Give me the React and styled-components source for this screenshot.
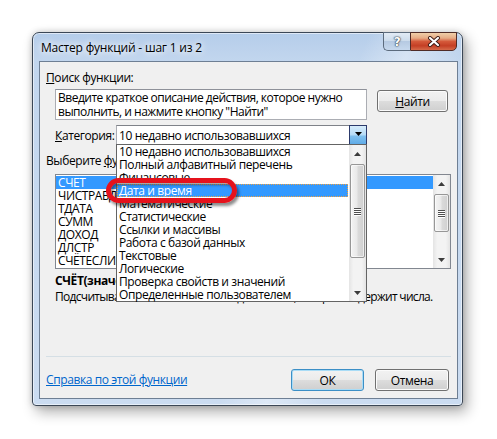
import React from 'react'
import styled, { createGlobalStyle } from 'styled-components'

const GlobalStyle = createGlobalStyle`
  html, body {
    margin: 0;
    padding: 0;
    background: #fff;
  }
  body {
    font-family: "Open Sans", "Noto Sans", sans-serif;
    font-size: 12px;
    letter-spacing: -0.4px;
    color: #000;
  }
  * {
    box-sizing: border-box;
  }
`

const Page = styled.div`
  width: 497px;
  height: 439px;
  padding: 32px 0 0 32px;
  overflow: hidden;
`

const Window = styled.div`
  width: 431px;
  height: 374px;
  display: flex;
  flex-direction: column;
  padding: 0 4px 6px 6px;
  border: 1px solid #3b4756;
  border-radius: 7px 7px 4px 4px;
  background:
    linear-gradient(112deg, rgba(255,255,255,0) 58%, rgba(255,255,255,0.35) 66%, rgba(255,255,255,0) 76%),
    linear-gradient(180deg, #b5cdea 0, #c2d6ee 28px, #cbdcf1 100%);
  box-shadow:
    inset 0 0 0 1px rgba(255,255,255,0.55),
    4px 6px 14px rgba(0,0,0,0.32),
    0 0 6px rgba(0,0,0,0.18);
`

const TitleBar = styled.div`
  height: 28px;
  display: flex;
  align-items: flex-start;
  flex: none;
`

const Title = styled.div`
  padding: 7px 0 0 2px;
  line-height: 16px;
  letter-spacing: -0.2px;
  text-shadow: 0 0 6px #fff, 0 0 10px #fff;
`

const CaptionButtons = styled.div`
  margin-left: auto;
  margin-top: -1px;
  margin-right: 1px;
  display: flex;
`

const HelpButton = styled.div`
  width: 27px;
  height: 19px;
  border: 1px solid #5c6b7d;
  border-right: none;
  border-radius: 0 0 0 5px;
  background: linear-gradient(#e2ebf5 0%, #cddcec 45%, #b6cae2 50%, #c6d8ed 100%);
  display: flex;
  align-items: center;
  justify-content: center;
  font-family: "DejaVu Sans", sans-serif;
  font-weight: bold;
  font-size: 12px;
  color: #fff;
  text-shadow: 0 0 1px #33404f, 0 0 1px #33404f, 0 0 2px #33404f;
`

const CloseButton = styled.div`
  width: 47px;
  height: 19px;
  border: 1px solid #4f2b26;
  border-radius: 0 0 5px 0;
  background: linear-gradient(#efcfa9 0%, #e6ab85 30%, #d4593a 50%, #c43f25 75%, #d56a4a 100%);
  display: flex;
  align-items: center;
  justify-content: center;
`

const Client = styled.div`
  flex: 1;
  display: flex;
  flex-direction: column;
  padding: 8px 6px 7px 6px;
  border: 1px solid #6e7f94;
  background: #f0f0f0;
`

const Label = styled.div`
  line-height: 15px;
  margin-top: ${p => p.$top || 0}px;
  padding-left: ${p => p.$indent || 0}px;
  font-weight: ${p => (p.$bold ? 700 : 400)};
  letter-spacing: ${p => (p.$tight ? '-0.7px' : 'inherit')};
  white-space: nowrap;
`

const Key = styled.span`
  text-decoration: underline;
  text-underline-offset: 1px;
`

const SearchRow = styled.div`
  display: flex;
  align-items: flex-start;
  margin-top: 4px;
  padding-left: 9px;
`

const SearchBox = styled.div`
  width: 312px;
  height: 31px;
  padding: 1px 2px;
  border: 1px solid #abadb3;
  border-top-color: #8e9199;
  background: #fff;
  line-height: 14px;
  letter-spacing: -0.5px;
  white-space: nowrap;
`

const Button = styled.button`
  width: ${p => p.$w}px;
  height: 22px;
  margin: ${p => p.$margin || 0};
  padding: 0;
  font: inherit;
  letter-spacing: inherit;
  color: #000;
  border: 1px solid ${p => (p.$primary ? '#3c8fc6' : '#707070')};
  border-radius: 3px;
  background: linear-gradient(#f2f2f2 0%, #ebebeb 49%, #dddddd 50%, #cfcfcf 100%);
  box-shadow: inset 0 0 0 1px ${p => (p.$primary ? '#a9dcf6' : '#fbfbfb')};
`

const CategoryRow = styled.div`
  display: flex;
  align-items: center;
  margin-top: 5px;
  padding-left: 9px;
`

const CategoryLabel = styled.div`
  width: 61px;
`

const Combo = styled.div`
  position: relative;
  width: 251px;
  height: 21px;
  display: flex;
  border: 1px solid #abadb3;
  border-top-color: #7f8289;
  background: #fff;
`

const ComboValue = styled.div`
  flex: 1;
  line-height: 19px;
  padding-left: 2px;
  white-space: nowrap;
`

const DropButton = styled.div`
  width: 18px;
  margin: -1px -1px -1px 0;
  border: 1px solid #2c3a6b;
  background: linear-gradient(#d7ecfb 0%, #b6dcf7 45%, #7fc0ef 55%, #5ca9e6 100%);
  display: flex;
  align-items: flex-start;
  justify-content: center;
  padding-top: 6px;
`

const Dropdown = styled.div`
  position: absolute;
  top: calc(100% - 1px);
  left: -1px;
  width: 251px;
  height: 158px;
  z-index: 5;
  display: flex;
  border: 1px solid #646464;
  background: #fff;
`

const DropItems = styled.div`
  flex: 1;
  display: flex;
  flex-direction: column;
`

const Item = styled.div`
  position: relative;
  height: 13px;
  line-height: 13px;
  padding-left: 2px;
  margin-right: ${p => p.$gap || 0}px;
  white-space: nowrap;
  color: ${p => (p.$selected ? '#fff' : '#000')};
  background: ${p => (p.$selected ? '#3399ff' : 'transparent')};
  outline: ${p => (p.$focus ? '1px dotted #f0a040' : 'none')};
  outline-offset: -1px;
`

const Mark = styled.div`
  position: absolute;
  left: -11px;
  top: -6px;
  width: 131px;
  height: 25px;
  z-index: 1;
  border: 5px solid #e5121c;
  border-radius: 13px;
  box-shadow: 2px 3px 3px rgba(0,0,0,0.45), inset 2px 2px 3px rgba(0,0,0,0.4);
`

const FuncList = styled.div`
  display: flex;
  margin: 6px 0 0 9px;
  width: 396px;
  height: 95px;
  border: 1px solid #828790;
  background: #fff;
`

const FuncItems = styled.div`
  flex: 1;
  padding-top: 1px;
  overflow: hidden;
`

const ScrollBar = styled.div`
  width: 17px;
  flex: none;
  display: flex;
  flex-direction: column;
  background: linear-gradient(90deg, #e4e4e4, #f3f3f3 25%, #f3f3f3 75%, #e4e4e4);
`

const ScrollArrow = styled.div`
  height: 17px;
  flex: none;
  display: flex;
  align-items: center;
  justify-content: center;
`

const ScrollTrack = styled.div`
  flex: 1;
  display: flex;
  flex-direction: column;
  padding: 0 1px;
`

const Thumb = styled.div`
  margin-top: ${p => p.$offset}px;
  height: ${p => p.$size}px;
  border: 1px solid #979797;
  border-radius: 2px;
  background: linear-gradient(90deg, #f4f4f4, #e9e9e9 45%, #dadada 55%, #d0d0d0);
  box-shadow: inset 0 0 0 1px rgba(255,255,255,0.6);
  display: flex;
  flex-direction: column;
  align-items: center;
  justify-content: center;
  gap: 1px;
`

const Grip = styled.span`
  width: 7px;
  height: 1px;
  background: #4e4e4e;
  box-shadow: 0 1px 0 #fff;
`

const Spacer = styled.div`
  flex: 1;
`

const Separator = styled.div`
  height: 1px;
  background: #d5dfe5;
`

const Footer = styled.div`
  display: flex;
  align-items: center;
  margin-top: 12px;
`

const HelpLink = styled.a`
  color: #0066cc;
  text-decoration: underline;
  text-underline-offset: 1px;
  margin-top: -2px;
  cursor: pointer;
`

const categories = [
  '10 недавно использовавшихся',
  'Полный алфавитный перечень',
  'Финансовые',
  'Дата и время',
  'Математические',
  'Статистические',
  'Ссылки и массивы',
  'Работа с базой данных',
  'Текстовые',
  'Логические',
  'Проверка свойств и значений',
  'Определенные пользователем',
]

const functions = ['СЧЁТ', 'ЧИСТРАБДНИ', 'ТДАТА', 'СУММ', 'ДОХОД', 'ДЛСТР', 'СЧЁТЕСЛИМН']

const Arrow = ({ up, color = '#3c3c3c' }) => (
  <svg width="7" height="4" viewBox="0 0 7 4">
    <polygon points={up ? '0,4 3.5,0 7,4' : '0,0 7,0 3.5,4'} fill={color} />
  </svg>
)

const VScroll = ({ offset, size }) => (
  <ScrollBar>
    <ScrollArrow><Arrow up /></ScrollArrow>
    <ScrollTrack>
      <Thumb $offset={offset} $size={size}>
        <Grip /><Grip /><Grip /><Grip />
      </Thumb>
    </ScrollTrack>
    <ScrollArrow><Arrow /></ScrollArrow>
  </ScrollBar>
)

const App = () => {
  return (
    <Page>
      <GlobalStyle />
      <Window>
        <TitleBar>
          <Title>Мастер функций - шаг 1 из 2</Title>
          <CaptionButtons>
            <HelpButton>?</HelpButton>
            <CloseButton>
              <svg width="14" height="11" viewBox="0 0 14 11">
                <path d="M3 2 L11 9 M11 2 L3 9" stroke="#3a1a14" strokeWidth="4" strokeLinecap="round" />
                <path d="M3 2 L11 9 M11 2 L3 9" stroke="#fff" strokeWidth="2.2" strokeLinecap="round" />
              </svg>
            </CloseButton>
          </CaptionButtons>
        </TitleBar>

        <Client>
          <Label><Key>П</Key>оиск функции:</Label>
          <SearchRow>
            <SearchBox>
              Введите краткое описание действия, которое нужно<br />
              выполнить, и нажмите кнопку "Найти"
            </SearchBox>
            <Button $w={71} $margin="1px 0 0 10px"><Key>Н</Key>айти</Button>
          </SearchRow>

          <CategoryRow>
            <CategoryLabel><Key>К</Key>атегория:</CategoryLabel>
            <Combo>
              <ComboValue>10 недавно использовавшихся</ComboValue>
              <DropButton><Arrow color="#000" /></DropButton>
              <Dropdown>
                <DropItems>
                  {categories.map((c, i) => (
                    <Item key={c} $gap={1} $selected={i === 3} $focus={i === 3}>
                      {c}
                      {i === 3 && <Mark />}
                    </Item>
                  ))}
                </DropItems>
                <VScroll offset={2} size={94} />
              </Dropdown>
            </Combo>
          </CategoryRow>

          <Label $top={7}>Выберите <Key>ф</Key>ункцию:</Label>
          <FuncList>
            <FuncItems>
              {functions.map((f, i) => (
                <Item key={f} $selected={i === 0}>{f}</Item>
              ))}
            </FuncItems>
            <VScroll offset={2} size={38} />
          </FuncList>

          <Label $top={4} $indent={9} $bold>СЧЁТ(значение1;значение2;...)</Label>
          <Label $top={1} $indent={9} $tight>Подсчитывает количество ячеек в диапазоне, который содержит числа.</Label>

          <Spacer />
          <Separator />
          <Footer>
            <HelpLink>Справка по этой функции</HelpLink>
            <Button $w={73} $primary $margin="0 0 0 auto">ОК</Button>
            <Button $w={74} $margin="0 2px 0 11px">Отмена</Button>
          </Footer>
        </Client>
      </Window>
    </Page>
  )
}

export default App
